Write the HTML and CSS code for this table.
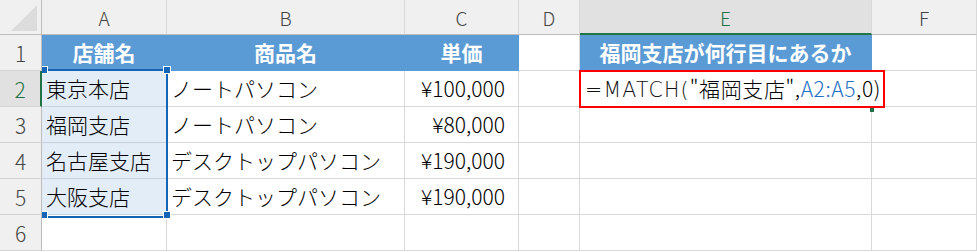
FILE: index.html
```html
<html lang="ja">
<head>
  <meta charset="UTF-8">
  <title>MATCH関数</title>
  <link rel="stylesheet" href="styles.css">
</head>
<body>
  <div class="sheet">
    <div class="grid">
      <!-- column headers -->
      <div class="hd corner"><span class="tri"></span></div>
      <div class="hd col">A</div>
      <div class="hd col">B</div>
      <div class="hd col">C</div>
      <div class="hd col">D</div>
      <div class="hd col active-col">E</div>
      <div class="hd col">F</div>

      <div class="hd row">1</div>
      <div class="c th">店舗名</div>
      <div class="c th">商品名</div>
      <div class="c th">単価</div>
      <div class="c"></div>
      <div class="c th">福岡支店が何行目にあるか</div>
      <div class="c"></div>

      <div class="hd row active-row">2</div>
      <div class="c sel">東京本店</div>
      <div class="c">ノートパソコン</div>
      <div class="c num">¥100,000</div>
      <div class="c"></div>
      <div class="c overflow"><span class="fn">=MATCH(</span>"福岡支店",<span class="ref">A2:A5</span>,0)</div>
      <div class="c"></div>

      <div class="hd row">3</div>
      <div class="c sel">福岡支店</div>
      <div class="c">ノートパソコン</div>
      <div class="c num">¥80,000</div>
      <div class="c"></div>
      <div class="c"></div>
      <div class="c"></div>

      <div class="hd row">4</div>
      <div class="c sel">名古屋支店</div>
      <div class="c">デスクトップパソコン</div>
      <div class="c num">¥190,000</div>
      <div class="c"></div>
      <div class="c"></div>
      <div class="c"></div>

      <div class="hd row">5</div>
      <div class="c sel">大阪支店</div>
      <div class="c">デスクトップパソコン</div>
      <div class="c num">¥190,000</div>
      <div class="c"></div>
      <div class="c"></div>
      <div class="c"></div>

      <div class="hd row">6</div>
      <div class="c"></div>
      <div class="c"></div>
      <div class="c"></div>
      <div class="c"></div>
      <div class="c"></div>
      <div class="c"></div>
    </div>

    <!-- referenced range A2:A5 -->
    <div class="range"></div>
    <span class="knob k-tl"></span>
    <span class="knob k-tr"></span>
    <span class="knob k-bl"></span>
    <span class="knob k-br"></span>

    <!-- active cell E2 -->
    <span class="fill-handle"></span>
    <div class="mark"></div>
  </div>
</body>
</html>
```

FILE: styles.css
```css
body {
  margin: 0;
  background: #fff;
  font-family: "Noto Sans CJK JP", "Noto Sans", sans-serif;
  font-weight: 300;
  color: #000;
}
.sheet {
  position: relative;
  width: 977px;
  height: 252px;
  overflow: hidden;
}
.grid {
  display: grid;
  grid-template-columns: 42px 125px 238px 114px 61px 292px 105px;
  grid-template-rows: 35px repeat(6, 36px);
}
.grid > div {
  box-sizing: border-box;
  border-right: 1px solid #d9d9d9;
  border-bottom: 1px solid #d9d9d9;
  white-space: nowrap;
}

/* headers */
.hd {
  background: #f0f0f0;
  color: #444;
  display: flex;
  align-items: center;
  justify-content: center;
}
.col {
  font-size: 19px;
  border-bottom-color: #bdbdbd !important;
  padding-top: 1px;
}
.row {
  font-size: 21px;
  border-right-color: #bdbdbd !important;
  border-bottom-color: #d4d4d4 !important;
}
.corner {
  position: relative;
  border-bottom-color: #bdbdbd !important;
  border-right-color: #bdbdbd !important;
}
.tri {
  position: absolute;
  right: 4px;
  bottom: 3px;
  width: 0;
  height: 0;
  border-left: 26px solid transparent;
  border-bottom: 26px solid #dcdcdc;
}
.active-col {
  background: #e1e1e1;
  color: #217346;
  border-bottom: 2px solid #217346 !important;
}
.active-row {
  background: #e1e1e1;
  color: #217346;
  border-right: 2px solid #217346 !important;
}

/* cells */
.c {
  font-size: 21px;
  line-height: 35px;
  padding-left: 4px;
}
.th {
  background: #5b9bd5;
  border-color: #5b9bd5 !important;
  color: #fff;
  font-weight: bold;
  text-align: center;
  padding-left: 0;
}
.num {
  text-align: right;
  padding-right: 13px;
}
.sel {
  background: #e3edf8;
  border-bottom-color: #c6d2de !important;
}
.overflow {
  border-right-color: transparent !important;
  overflow: visible;
  position: relative;
  z-index: 1;
  padding-left: 5px;
  letter-spacing: 0.6px;
}
/* wider latin for the function name */
.fn {
  font-family: "DejaVu Sans", sans-serif;
  font-weight: 200;
  font-size: 20.5px;
  letter-spacing: 1.2px;
  color: #111;
}
.ref {
  color: #1f6fc2;
}

/* range outline and its corner knobs */
.range {
  position: absolute;
  left: 42px;
  top: 69px;
  width: 124px;
  height: 145px;
  border-top: 2px solid #1565b7;
  border-right: 2px solid #1565b7;
  border-bottom: 2px solid #1565b7;
}
.knob {
  position: absolute;
  width: 6px;
  height: 6px;
  background: #1565b7;
  border: 1px solid #fff;
}
.k-tl { left: 40px; top: 66px; }
.k-tr { left: 163px; top: 66px; }
.k-bl { left: 40px; top: 211px; }
.k-br { left: 163px; top: 211px; }
.k-tl, .k-bl {
  clip-path: inset(0 0 0 2px);
}

.fill-handle {
  position: absolute;
  left: 870px;
  top: 106px;
  width: 4px;
  height: 6px;
  background: #217346;
}
.mark {
  position: absolute;
  left: 579px;
  top: 70px;
  width: 302px;
  height: 34px;
  border: 2px solid #f00;
  z-index: 2;
}
```
